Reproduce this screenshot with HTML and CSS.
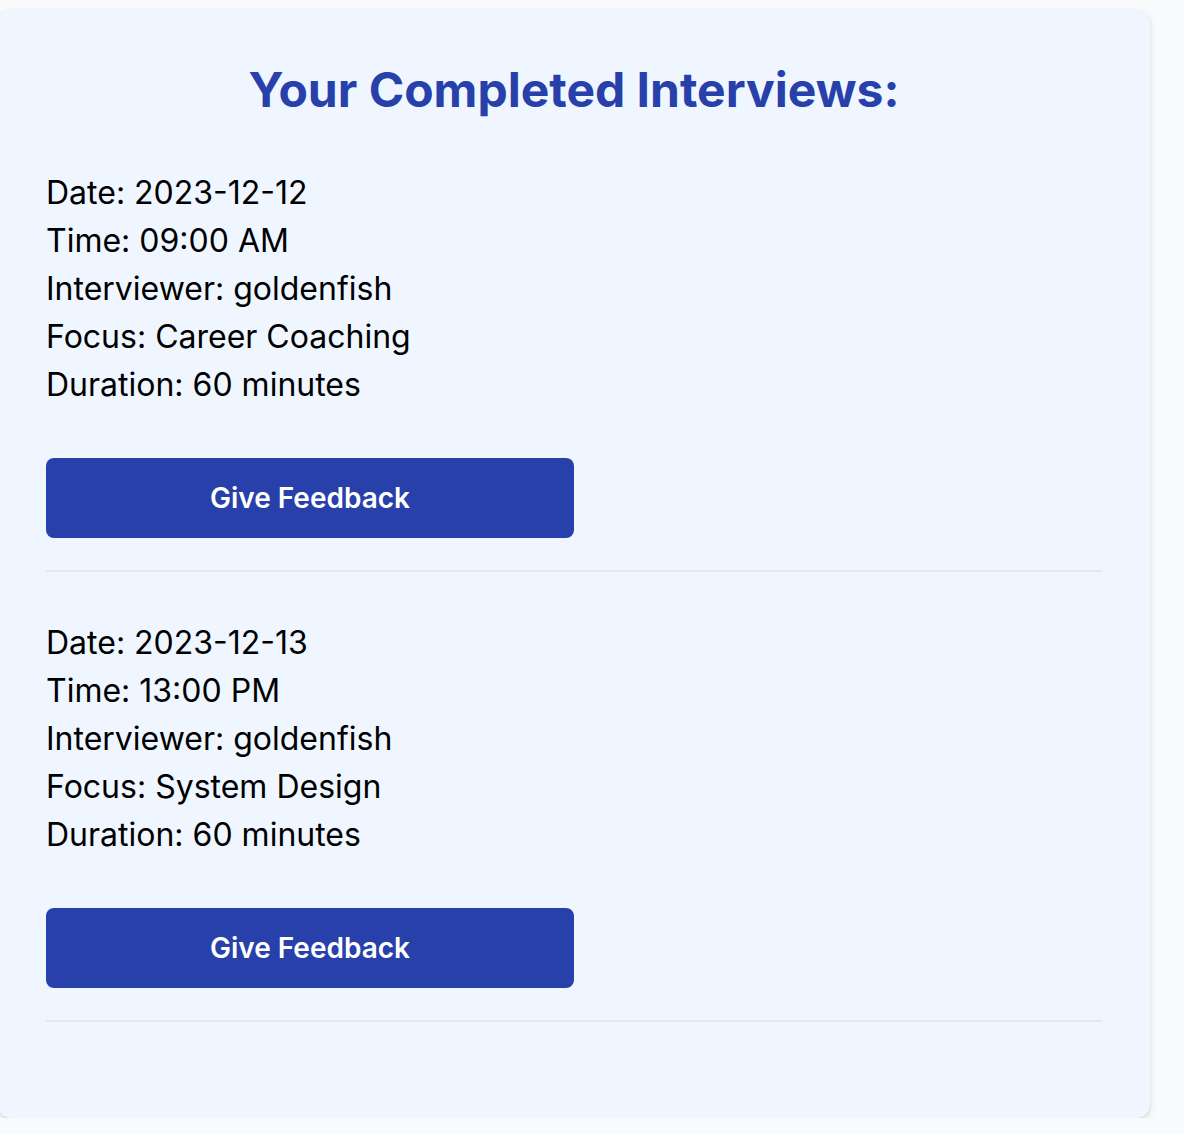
FILE: index.html
```html
<!DOCTYPE html>
<html>
<head>
<meta charset="utf-8">
<link rel="stylesheet" href="styles.css">
</head>
<body>
<div class="card">
  <h1 class="title">Your Completed Interviews:</h1>
  <div class="item">
    <div class="info">
      <p>Date: 2023-12-12</p>
      <p>Time: 09:00 AM</p>
      <p>Interviewer: goldenfish</p>
      <p>Focus: Career Coaching</p>
      <p>Duration: 60 minutes</p>
    </div>
    <button class="btn">Give Feedback</button>
  </div>
  <div class="item">
    <div class="info">
      <p>Date: 2023-12-13</p>
      <p>Time: 13:00 PM</p>
      <p>Interviewer: goldenfish</p>
      <p>Focus: System Design</p>
      <p>Duration: 60 minutes</p>
    </div>
    <button class="btn">Give Feedback</button>
  </div>
</div>
</body>
</html>
```
FILE: styles.css
```css
html, body {
  margin: 0;
  padding: 0;
  background: #f9fafb;
  font-family: Inter, "Noto Sans", sans-serif;
}
body {
  padding-top: 10px;
}
.card {
  width: 1152px;
  margin-left: -2px;
  box-sizing: border-box;
  padding: 50px 48px 49px;
  background: #eff6ff;
  border-radius: 13px;
  box-shadow: 0 4px 10px rgba(0, 0, 0, 0.08), 0 1px 3px rgba(0, 0, 0, 0.1);
}
.title {
  margin: 0 0 50px;
  font-size: 48px;
  font-weight: 700;
  line-height: normal;
  text-align: center;
  color: #2740aa;
}
.item {
  padding-bottom: 32px;
  border-bottom: 2px solid #e5e7eb;
  margin-bottom: 47px;
}
.info p {
  margin: 0;
  font-size: 32px;
  line-height: 48px;
  color: #000;
}
.btn {
  display: block;
  margin-top: 49px;
  width: 528px;
  height: 80px;
  border: none;
  border-radius: 8px;
  background: #2740aa;
  color: #fff;
  font-family: Inter, "Noto Sans", sans-serif;
  font-size: 28px;
  font-weight: 600;
  cursor: pointer;
}
```
